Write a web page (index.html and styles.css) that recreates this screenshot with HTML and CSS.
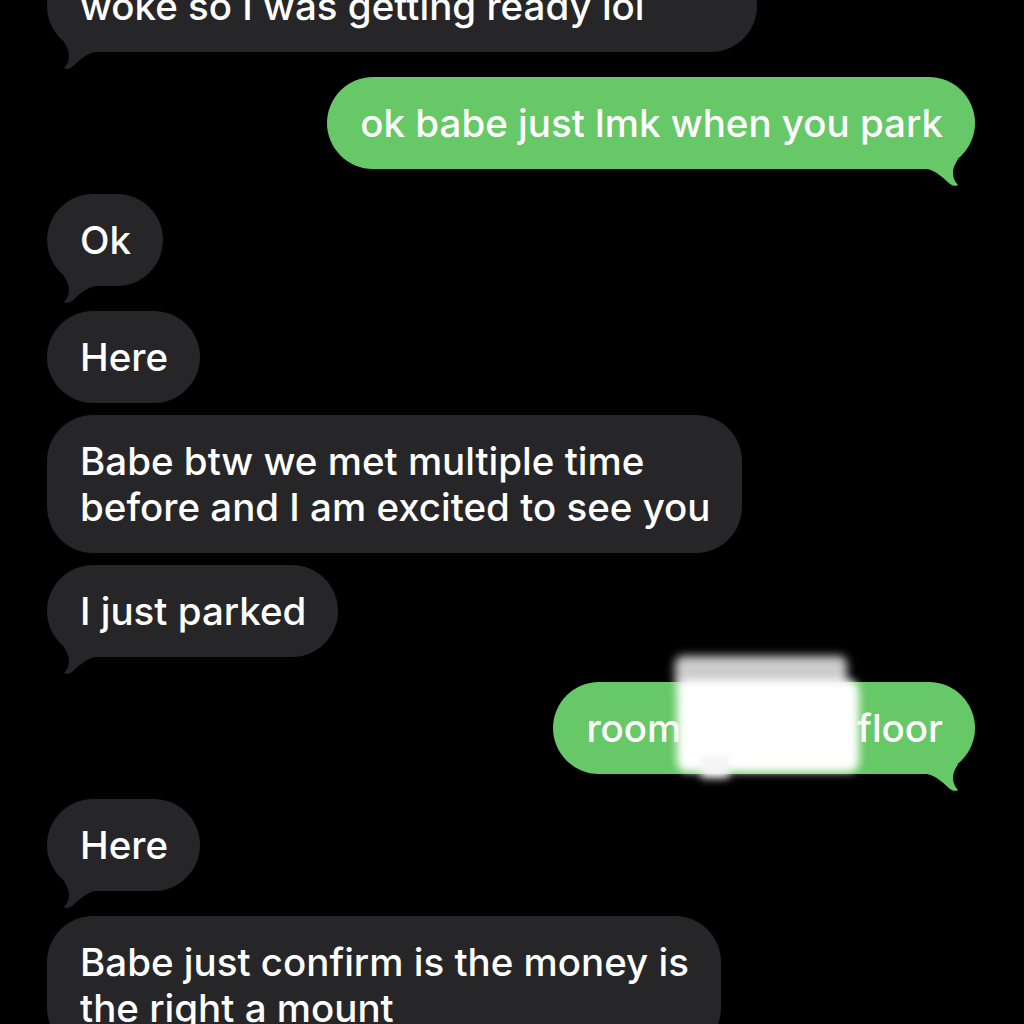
FILE: index.html
```html
<!DOCTYPE html>
<html lang="en">
  <head>
    <meta charset="UTF-8" />
    <meta name="viewport" content="width=device-width, initial-scale=1.0" />
    <title>Messages</title>
    <link rel="stylesheet" href="styles.css">
  </head>
  <body>
    <div class="chat">
      <div class="msg in tail first">
        woke so I was getting ready lol
        <svg class="tail-shape" viewBox="0 0 52 30"><path d="M17 0 C19 4 22 8 22 14 C22 19 20 23 17 26 C19 27.5 22 27 25 25 C31 20 38 12 48 10 L52 10 L52 0 Z" /></svg>
      </div>
      <div class="msg out tail">
        ok babe just lmk when you park
        <svg class="tail-shape" viewBox="0 0 52 30"><path d="M17 0 C19 4 22 8 22 14 C22 19 20 23 17 26 C19 27.5 22 27 25 25 C31 20 38 12 48 10 L52 10 L52 0 Z" /></svg>
      </div>
      <div class="msg in tail">
        Ok
        <svg class="tail-shape" viewBox="0 0 52 30"><path d="M17 0 C19 4 22 8 22 14 C22 19 20 23 17 26 C19 27.5 22 27 25 25 C31 20 38 12 48 10 L52 10 L52 0 Z" /></svg>
      </div>
      <div class="msg in">Here</div>
      <div class="msg in">Babe btw we met multiple time<br />before and I am excited to see you</div>
      <div class="msg in tail">
        I just parked
        <svg class="tail-shape" viewBox="0 0 52 30"><path d="M17 0 C19 4 22 8 22 14 C22 19 20 23 17 26 C19 27.5 22 27 25 25 C31 20 38 12 48 10 L52 10 L52 0 Z" /></svg>
      </div>
      <div class="msg out tail">
        room<span class="redacted"></span>floor
        <svg class="tail-shape" viewBox="0 0 52 30"><path d="M17 0 C19 4 22 8 22 14 C22 19 20 23 17 26 C19 27.5 22 27 25 25 C31 20 38 12 48 10 L52 10 L52 0 Z" /></svg>
        <div class="smudge">
          <span class="smudge-top"></span>
          <span class="smudge-main"></span>
          <span class="smudge-drip"></span>
        </div>
      </div>
      <div class="msg in tail">
        Here
        <svg class="tail-shape" viewBox="0 0 52 30"><path d="M17 0 C19 4 22 8 22 14 C22 19 20 23 17 26 C19 27.5 22 27 25 25 C31 20 38 12 48 10 L52 10 L52 0 Z" /></svg>
      </div>
      <div class="msg in">Babe just confirm is the money is<br />the right a mount</div>
    </div>
  </body>
</html>
```

FILE: styles.css
```css
/* Layout */
html,
body {
  margin: 0;
  padding: 0;
  background: #000;
  font-family: Inter, "Noto Sans", sans-serif;
  color: #fff;
  overflow: hidden;
}
.chat {
  display: flex;
  flex-direction: column;
  gap: 12px;
  padding: 0 49px 0 47px;
  margin-top: -40px;
}
/* Bubbles */
.msg {
  position: relative;
  padding: 23px 32px 23px 33px;
  font-size: 38.5px;
  font-weight: 500;
  line-height: 46px;
  border-radius: 46px;
  white-space: nowrap;
}
.msg.in {
  align-self: flex-start;
  background: #262628;
}
.msg.out {
  align-self: flex-end;
  background: #67c867;
}
.msg.first {
  width: 710px;
  box-sizing: border-box;
}
.msg.tail {
  margin-bottom: 13px;
}
/* Tail */
.tail-shape {
  position: absolute;
  bottom: -20px;
  width: 52px;
  height: 30px;
}
.in .tail-shape {
  left: 0;
  fill: #262628;
}
.out .tail-shape {
  right: 0;
  fill: #67c867;
  transform: scaleX(-1);
}
/* Redaction */
.redacted {
  display: inline-block;
  width: 176px;
}
.smudge {
  position: absolute;
  left: 122px;
  top: -26px;
  width: 190px;
  height: 124px;
}
.smudge span {
  position: absolute;
  display: block;
}
.smudge-top {
  left: 0;
  top: 0;
  width: 172px;
  height: 34px;
  background: rgba(215, 215, 215, 0.95);
  border-radius: 8px;
  filter: blur(5px);
}
.smudge-main {
  left: 2px;
  top: 24px;
  width: 182px;
  height: 92px;
  background: #fff;
  border-radius: 10px;
  filter: blur(4px);
}
.smudge-drip {
  left: 26px;
  top: 100px;
  width: 28px;
  height: 22px;
  background: #f4f4f4;
  filter: blur(4px);
}
```
